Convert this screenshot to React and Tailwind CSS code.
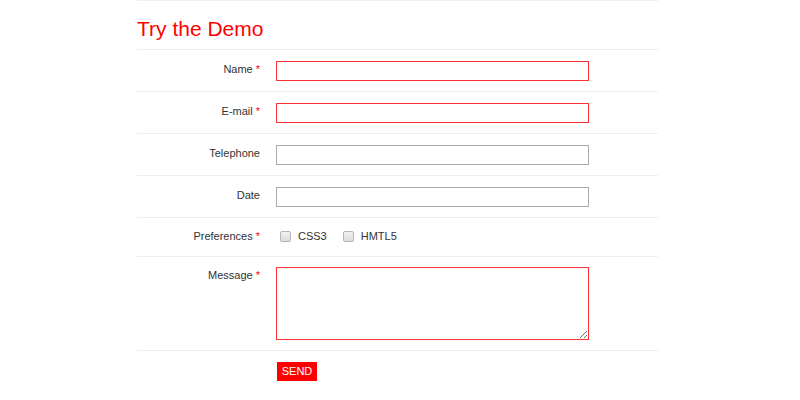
import React from "react";

const rows = [
  { label: "Name", required: true },
  { label: "E-mail", required: true },
  { label: "Telephone", required: false },
  { label: "Date", required: false },
];

function Label({ text, required, className = "" }) {
  return (
    <div className={`w-[123px] shrink-0 text-right text-[11px] text-[#333] ${className}`}>
      {text}
      {required && <span className="ml-[3px] text-[#f00]">*</span>}
    </div>
  );
}

function Box({ text }) {
  return (
    <label className="flex items-center">
      <span className="block w-[11px] h-[11px] rounded-[2px] border border-[#b5b5b5] bg-gradient-to-b from-[#f2f2f2] to-[#dcdcdc]" />
      <span className="ml-[7px] text-[11px] text-[#333]">{text}</span>
    </label>
  );
}

export default function App() {
  return (
    <div className="w-[800px] h-[400px] bg-white overflow-hidden" style={{ fontFamily: '"Liberation Sans", Arial, sans-serif' }}>
      <div className="ml-[137px] w-[521px] border-t border-[#f0f0f0]">
        {/* Title */}
        <div className="h-[48px] flex items-center">
          <h1 className="text-[21px] text-[#f00] leading-none mt-[6px]">Try the Demo</h1>
        </div>

        {rows.map((r) => (
          <div key={r.label} className="border-t border-[#eee] flex items-center pt-[11px] pb-[10px]">
            <Label text={r.label} required={r.required} className="pb-[3px]" />
            <input
              type="text"
              className={`ml-[16px] w-[313px] h-[20px] border outline-none ${r.required ? "border-[#f33]" : "border-[#aaa]"}`}
            />
          </div>
        ))}

        {/* Preferences */}
        <div className="border-t border-[#eee] flex items-center h-[39px] pb-[2px]">
          <Label text="Preferences" required />
          <div className="ml-[20px] flex items-center gap-[16px]">
            <Box text="CSS3" />
            <Box text="HMTL5" />
          </div>
        </div>

        {/* Message */}
        <div className="border-t border-[#eee] flex items-start pt-[10px] pb-[10px]">
          <Label text="Message" required />
          <textarea className="block ml-[16px] w-[313px] h-[73px] border border-[#f33] outline-none resize-y" />
        </div>

        {/* Submit */}
        <div className="border-t border-[#eee] pt-[11px] flex">
          <button className="ml-[140px] h-[19px] w-[40px] flex items-center justify-center bg-[#f00] text-white text-[11px]">SEND</button>
        </div>
      </div>
    </div>
  );
}
